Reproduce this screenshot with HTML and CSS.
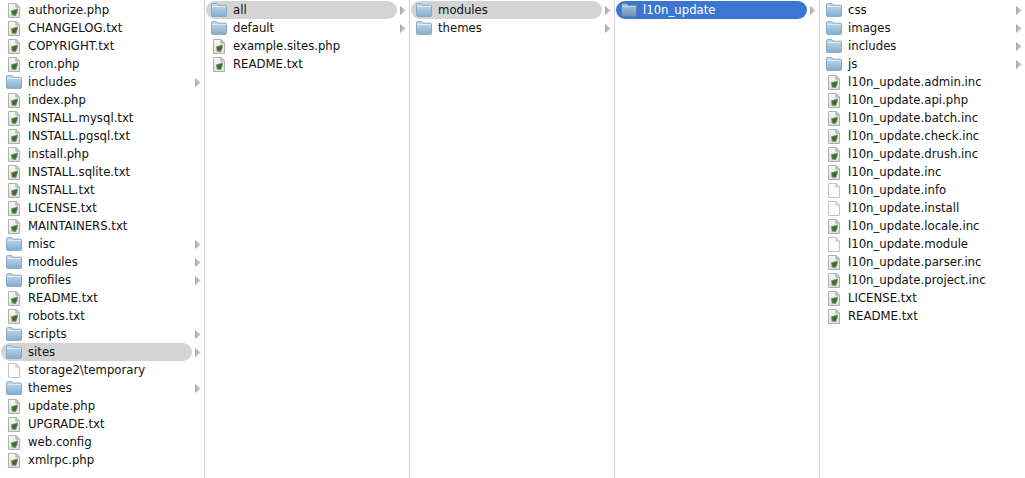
FILE: index.html
```html
<!DOCTYPE html>
<html lang="en">
<head>
<meta charset="utf-8">
<title>Finder columns</title>
<link rel="stylesheet" href="styles.css">
</head>
<body>
<svg class="defs" width="0" height="0" aria-hidden="true">
  <defs>
    <linearGradient id="fold" x1="0" y1="0" x2="0" y2="1">
      <stop offset="0" stop-color="#cbdeed"/><stop offset=".3" stop-color="#b2cde3"/><stop offset="1" stop-color="#86adcd"/>
    </linearGradient>
    <linearGradient id="foldsel" x1="0" y1="0" x2="0" y2="1">
      <stop offset="0" stop-color="#b2c7da"/><stop offset=".3" stop-color="#97b3cd"/><stop offset="1" stop-color="#6f93b6"/>
    </linearGradient>
    <linearGradient id="tri" x1="0" y1="0" x2="1" y2="0">
      <stop offset="0" stop-color="#a8a8a8"/><stop offset="1" stop-color="#d8d8d8"/>
    </linearGradient>
    <linearGradient id="page" x1="0" y1="0" x2="0" y2="1">
      <stop offset="0" stop-color="#f8f8f8"/><stop offset="1" stop-color="#dedede"/>
    </linearGradient>
    <symbol id="folder" viewBox="0 0 16 14">
      <path d="M.5 12.6V1.4C.5 1 .9.6 1.3.6h4.2c.4 0 .7.2.9.6l.5 1h7.8c.4 0 .8.4.8.8v9.6c0 .4-.4.8-.8.8H1.3c-.4 0-.8-.4-.8-.8z" fill="url(#fold)" stroke="#8aa8c2"/>
      <path d="M1 3.5h14" stroke="#e0ecf6" stroke-width="1"/>
    </symbol>
    <symbol id="foldersel" viewBox="0 0 16 14">
      <path d="M.5 12.6V1.4C.5 1 .9.6 1.3.6h4.2c.4 0 .7.2.9.6l.5 1h7.8c.4 0 .8.4.8.8v9.6c0 .4-.4.8-.8.8H1.3c-.4 0-.8-.4-.8-.8z" fill="url(#foldsel)" stroke="#5c7fa6"/>
      <path d="M1 3.5h14" stroke="#c7d6e6" stroke-width="1"/>
    </symbol>
    <symbol id="doc" viewBox="0 0 12 15">
      <path d="M.5.5h7.4l3.6 3.6v10.4H.5z" fill="#fcfcfc" stroke="#c4c4c4"/>
      <path d="M7.9.5v3.6h3.6z" fill="#e6e6e6" stroke="#c4c4c4"/>
    </symbol>
    <symbol id="script" viewBox="0 0 12 15">
      <path d="M.5.5h7.4l3.6 3.6v10.4H.5z" fill="url(#page)" stroke="#b0b0b0"/>
      <path d="M7.9.5v3.6h3.6z" fill="#d8d8d8" stroke="#a8a8a8"/>
      <path d="M3 7.4 10 5.4 9.6 9l-1.8 4-4-.6z" fill="#6f9362"/>
      <path d="M4 8.2 9 6.6 8.6 9.2 7.2 12 4.6 11.6z" fill="#3f6b33"/>
    </symbol>
    <symbol id="arrow" viewBox="0 0 6 9">
      <path d="M0 0l6 4.5L0 9z" fill="url(#tri)"/>
    </symbol>
  </defs>
</svg>
<main class="browser">
  <ul class="col">
    <li class="row"><svg class="i-file"><use href="#script"/></svg><span class="name">authorize.php</span></li>
    <li class="row"><svg class="i-file"><use href="#script"/></svg><span class="name">CHANGELOG.txt</span></li>
    <li class="row"><svg class="i-file"><use href="#script"/></svg><span class="name">COPYRIGHT.txt</span></li>
    <li class="row"><svg class="i-file"><use href="#script"/></svg><span class="name">cron.php</span></li>
    <li class="row"><svg class="i-dir"><use href="#folder"/></svg><span class="name">includes</span><svg class="i-arrow"><use href="#arrow"/></svg></li>
    <li class="row"><svg class="i-file"><use href="#script"/></svg><span class="name">index.php</span></li>
    <li class="row"><svg class="i-file"><use href="#script"/></svg><span class="name">INSTALL.mysql.txt</span></li>
    <li class="row"><svg class="i-file"><use href="#script"/></svg><span class="name">INSTALL.pgsql.txt</span></li>
    <li class="row"><svg class="i-file"><use href="#script"/></svg><span class="name">install.php</span></li>
    <li class="row"><svg class="i-file"><use href="#script"/></svg><span class="name">INSTALL.sqlite.txt</span></li>
    <li class="row"><svg class="i-file"><use href="#script"/></svg><span class="name">INSTALL.txt</span></li>
    <li class="row"><svg class="i-file"><use href="#script"/></svg><span class="name">LICENSE.txt</span></li>
    <li class="row"><svg class="i-file"><use href="#script"/></svg><span class="name">MAINTAINERS.txt</span></li>
    <li class="row"><svg class="i-dir"><use href="#folder"/></svg><span class="name">misc</span><svg class="i-arrow"><use href="#arrow"/></svg></li>
    <li class="row"><svg class="i-dir"><use href="#folder"/></svg><span class="name">modules</span><svg class="i-arrow"><use href="#arrow"/></svg></li>
    <li class="row"><svg class="i-dir"><use href="#folder"/></svg><span class="name">profiles</span><svg class="i-arrow"><use href="#arrow"/></svg></li>
    <li class="row"><svg class="i-file"><use href="#script"/></svg><span class="name">README.txt</span></li>
    <li class="row"><svg class="i-file"><use href="#script"/></svg><span class="name">robots.txt</span></li>
    <li class="row"><svg class="i-dir"><use href="#folder"/></svg><span class="name">scripts</span><svg class="i-arrow"><use href="#arrow"/></svg></li>
    <li class="row open"><svg class="i-dir"><use href="#folder"/></svg><span class="name">sites</span><svg class="i-arrow"><use href="#arrow"/></svg></li>
    <li class="row"><svg class="i-file"><use href="#doc"/></svg><span class="name">storage2\temporary</span></li>
    <li class="row"><svg class="i-dir"><use href="#folder"/></svg><span class="name">themes</span><svg class="i-arrow"><use href="#arrow"/></svg></li>
    <li class="row"><svg class="i-file"><use href="#script"/></svg><span class="name">update.php</span></li>
    <li class="row"><svg class="i-file"><use href="#script"/></svg><span class="name">UPGRADE.txt</span></li>
    <li class="row"><svg class="i-file"><use href="#script"/></svg><span class="name">web.config</span></li>
    <li class="row"><svg class="i-file"><use href="#script"/></svg><span class="name">xmlrpc.php</span></li>
  </ul>
  <ul class="col">
    <li class="row open"><svg class="i-dir"><use href="#folder"/></svg><span class="name">all</span><svg class="i-arrow"><use href="#arrow"/></svg></li>
    <li class="row"><svg class="i-dir"><use href="#folder"/></svg><span class="name">default</span><svg class="i-arrow"><use href="#arrow"/></svg></li>
    <li class="row"><svg class="i-file"><use href="#script"/></svg><span class="name">example.sites.php</span></li>
    <li class="row"><svg class="i-file"><use href="#script"/></svg><span class="name">README.txt</span></li>
  </ul>
  <ul class="col">
    <li class="row open"><svg class="i-dir"><use href="#folder"/></svg><span class="name">modules</span><svg class="i-arrow"><use href="#arrow"/></svg></li>
    <li class="row"><svg class="i-dir"><use href="#folder"/></svg><span class="name">themes</span><svg class="i-arrow"><use href="#arrow"/></svg></li>
  </ul>
  <ul class="col">
    <li class="row selected"><svg class="i-dir"><use href="#foldersel"/></svg><span class="name">l10n_update</span><svg class="i-arrow"><use href="#arrow"/></svg></li>
  </ul>
  <ul class="col last">
    <li class="row"><svg class="i-dir"><use href="#folder"/></svg><span class="name">css</span><svg class="i-arrow"><use href="#arrow"/></svg></li>
    <li class="row"><svg class="i-dir"><use href="#folder"/></svg><span class="name">images</span><svg class="i-arrow"><use href="#arrow"/></svg></li>
    <li class="row"><svg class="i-dir"><use href="#folder"/></svg><span class="name">includes</span><svg class="i-arrow"><use href="#arrow"/></svg></li>
    <li class="row"><svg class="i-dir"><use href="#folder"/></svg><span class="name">js</span><svg class="i-arrow"><use href="#arrow"/></svg></li>
    <li class="row"><svg class="i-file"><use href="#script"/></svg><span class="name">l10n_update.admin.inc</span></li>
    <li class="row"><svg class="i-file"><use href="#script"/></svg><span class="name">l10n_update.api.php</span></li>
    <li class="row"><svg class="i-file"><use href="#script"/></svg><span class="name">l10n_update.batch.inc</span></li>
    <li class="row"><svg class="i-file"><use href="#script"/></svg><span class="name">l10n_update.check.inc</span></li>
    <li class="row"><svg class="i-file"><use href="#script"/></svg><span class="name">l10n_update.drush.inc</span></li>
    <li class="row"><svg class="i-file"><use href="#script"/></svg><span class="name">l10n_update.inc</span></li>
    <li class="row"><svg class="i-file"><use href="#doc"/></svg><span class="name">l10n_update.info</span></li>
    <li class="row"><svg class="i-file"><use href="#doc"/></svg><span class="name">l10n_update.install</span></li>
    <li class="row"><svg class="i-file"><use href="#script"/></svg><span class="name">l10n_update.locale.inc</span></li>
    <li class="row"><svg class="i-file"><use href="#doc"/></svg><span class="name">l10n_update.module</span></li>
    <li class="row"><svg class="i-file"><use href="#script"/></svg><span class="name">l10n_update.parser.inc</span></li>
    <li class="row"><svg class="i-file"><use href="#script"/></svg><span class="name">l10n_update.project.inc</span></li>
    <li class="row"><svg class="i-file"><use href="#script"/></svg><span class="name">LICENSE.txt</span></li>
    <li class="row"><svg class="i-file"><use href="#script"/></svg><span class="name">README.txt</span></li>
  </ul>
</main>
</body>
</html>
```
FILE: styles.css
```css
html, body {
  margin: 0;
  height: 100%;
  background: #fff;
  overflow: hidden;
}
.defs {
  display: block;
  height: 0;
}
.browser {
  display: grid;
  grid-template-columns: repeat(5, 205px);
  height: 478px;
  font-family: "DejaVu Sans", sans-serif;
  font-size: 11.7px;
  color: #111;
}
.col {
  list-style: none;
  margin: 0;
  padding: 1px 0 0;
  border-right: 1px solid #d2d2d2;
}
.col.last {
  border-right: 0;
}
.row {
  position: relative;
  isolation: isolate;
  display: flex;
  align-items: center;
  height: 18px;
  padding-left: 6px;
}
.open::before,
.selected::before {
  content: "";
  position: absolute;
  z-index: -1;
  top: 0;
  left: 1px;
  width: 191px;
  height: 18px;
  border-radius: 9px;
  background: #d4d4d4;
}
.selected::before {
  background: #3a76d2;
}
.selected {
  color: #fff;
}
.i-dir {
  flex: none;
  width: 16px;
  height: 14px;
  margin-right: 6px;
}
.i-file {
  flex: none;
  width: 12px;
  height: 15px;
  margin: 0 8px 0 2px;
}
.i-arrow {
  flex: none;
  width: 6px;
  height: 9px;
  margin-left: auto;
  margin-right: 3px;
}
.name {
  white-space: nowrap;
  line-height: 18px;
}
```
